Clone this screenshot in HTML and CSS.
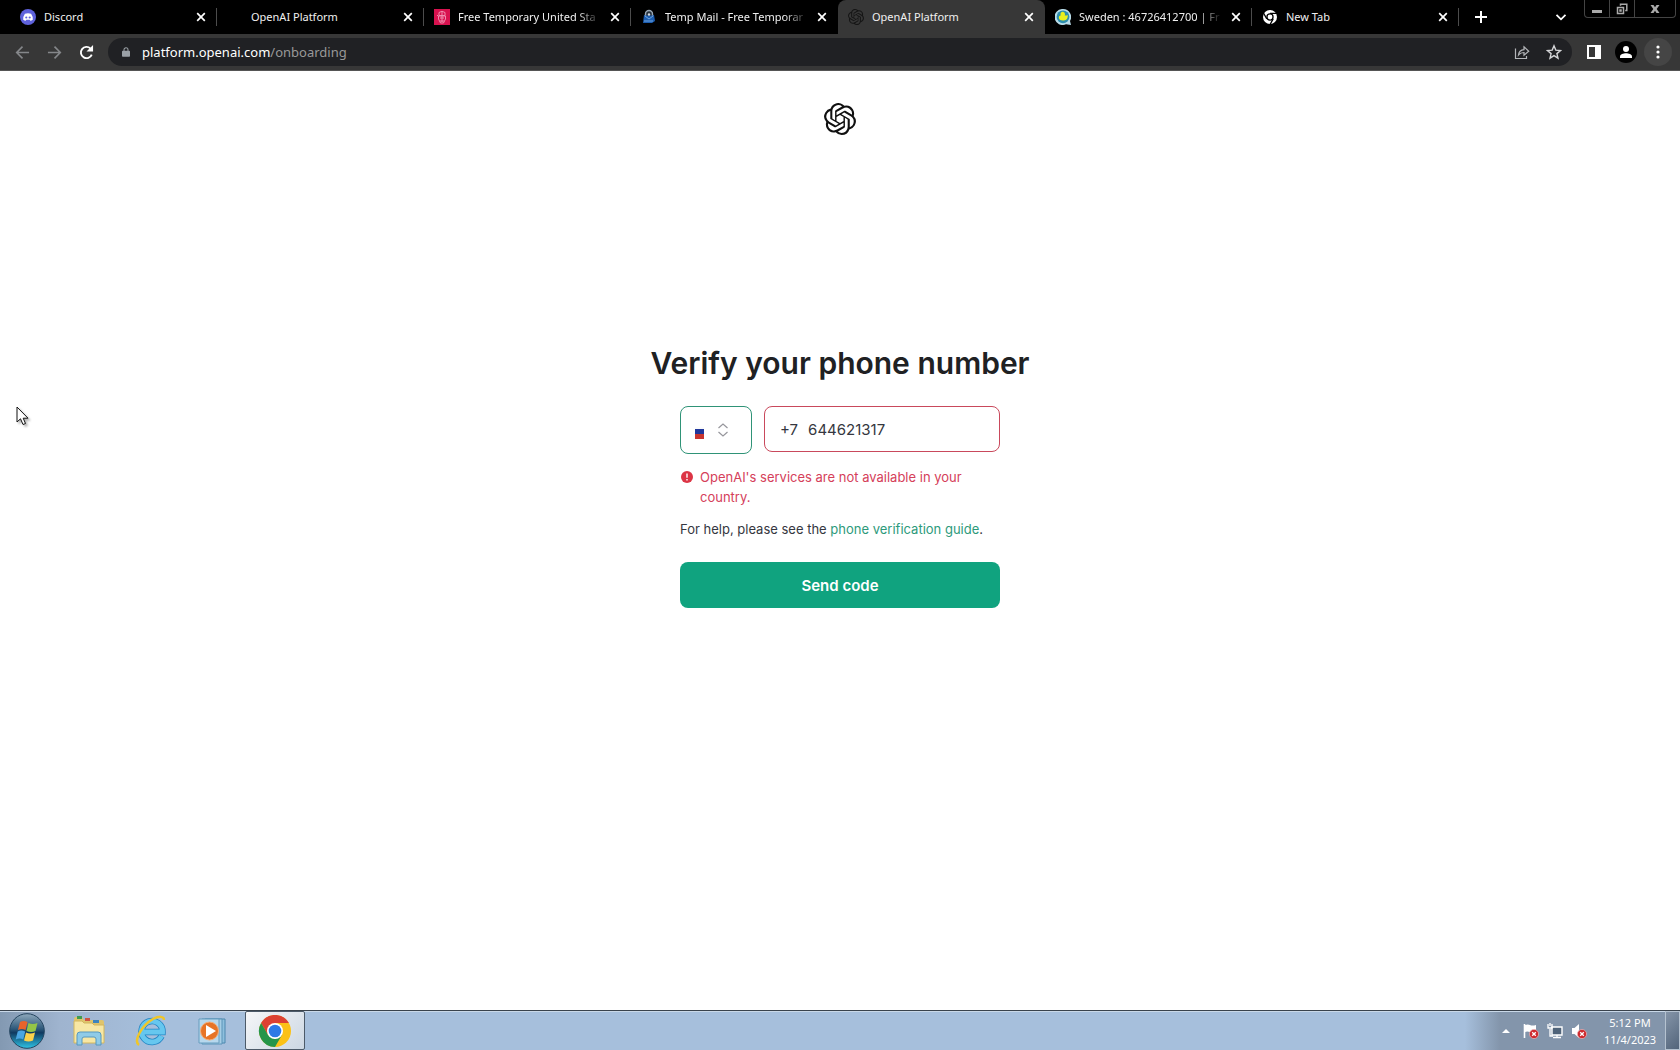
FILE: index.html
```
<!DOCTYPE html>
<html lang="en">
<head>
    <meta charset="UTF-8">
    <meta name="viewport" content="width=device-width, initial-scale=1.0">
    <title>OpenAI Platform</title>
    <link rel="stylesheet" href="styles.css">
</head>
<body>
    <svg class="defs" aria-hidden="true">
        <symbol id="openai" viewBox="0 0 24 24">
            <path d="M22.2819 9.8211a5.9847 5.9847 0 0 0-.5157-4.9108 6.0462 6.0462 0 0 0-6.5098-2.9A6.0651 6.0651 0 0 0 4.9807 4.1818a5.9847 5.9847 0 0 0-3.9977 2.9 6.0462 6.0462 0 0 0 .7427 7.0966 5.98 5.98 0 0 0 .511 4.9107 6.051 6.051 0 0 0 6.5146 2.9001A5.9847 5.9847 0 0 0 13.2599 24a6.0557 6.0557 0 0 0 5.7718-4.2058 5.9894 5.9894 0 0 0 3.9977-2.9001 6.0557 6.0557 0 0 0-.7475-7.0729zm-9.022 12.6081a4.4755 4.4755 0 0 1-2.8764-1.0408l.1419-.0804 4.7783-2.7582a.7948.7948 0 0 0 .3927-.6813v-6.7369l2.02 1.1686a.071.071 0 0 1 .038.052v5.5826a4.504 4.504 0 0 1-4.4945 4.4944zm-9.6607-4.1254a4.4708 4.4708 0 0 1-.5346-3.0137l.142.0852 4.783 2.7582a.7712.7712 0 0 0 .7806 0l5.8428-3.3685v2.3324a.0804.0804 0 0 1-.0332.0615L9.74 19.9502a4.4992 4.4992 0 0 1-6.1408-1.6464zM2.3408 7.8956a4.485 4.485 0 0 1 2.3655-1.9728V11.6a.7664.7664 0 0 0 .3879.6765l5.8144 3.3543-2.0201 1.1685a.0757.0757 0 0 1-.071 0l-4.8303-2.7865A4.504 4.504 0 0 1 2.3408 7.872zm16.5963 3.8558L13.1038 8.364 15.1192 7.2a.0757.0757 0 0 1 .071 0l4.8303 2.7913a4.4944 4.4944 0 0 1-.6765 8.1042v-5.6772a.79.79 0 0 0-.407-.667zm2.0107-3.0231l-.142-.0852-4.7735-2.7818a.7759.7759 0 0 0-.7854 0L9.409 9.2297V6.8974a.0662.0662 0 0 1 .0284-.0615l4.8303-2.7866a4.4992 4.4992 0 0 1 6.6802 4.66zM8.3065 12.863l-2.02-1.1638a.0804.0804 0 0 1-.038-.0567V6.0742a4.4992 4.4992 0 0 1 7.3757-3.4537l-.142.0805L8.704 5.459a.7948.7948 0 0 0-.3927.6813zm1.0976-2.3654l2.602-1.4998 2.6069 1.4998v2.9994l-2.5974 1.4997-2.6067-1.4997Z"/>
        </symbol>
        <symbol id="close" viewBox="0 0 10 10">
            <path d="M1.2 1.2l7.6 7.6M8.8 1.2L1.2 8.8" fill="none" stroke="currentColor" stroke-width="1.7"/>
        </symbol>
        <symbol id="alert" viewBox="0 0 10 10">
            <circle cx="5" cy="5" r="4.6" fill="#cf2a2e" stroke="#e9b5b8" stroke-width=".7"/>
            <path d="M3.2 3.2l3.6 3.6M6.8 3.2L3.2 6.8" stroke="#fff" stroke-width="1.3"/>
        </symbol>
    </svg>

    <header class="browser">
        <div class="tabstrip">
            <div class="tab">
                <svg class="favicon" viewBox="0 0 16 16"><circle cx="8" cy="8" r="8" fill="#5f62dc"/><path d="M4.9 4.8Q8 3.6 11.1 4.8Q13 7.500 12.800 10.700Q11.600 11.600 10.300 11.800L9.700 10.800H6.300L5.700 11.800Q4.400 11.600 3.200 10.700Q3 7.500 4.900 4.800Z" fill="#fff"/><circle cx="6.300" cy="8.500" r="1.100" fill="#5f62dc"/><circle cx="9.700" cy="8.500" r="1.100" fill="#5f62dc"/></svg>
                <span class="tab-title">Discord</span>
                <button class="tab-close" aria-label="Close tab"><svg><use href="#close"/></svg></button>
            </div>
            <div class="tab">
                <span class="favicon"></span>
                <span class="tab-title">OpenAI Platform</span>
                <button class="tab-close" aria-label="Close tab"><svg><use href="#close"/></svg></button>
            </div>
            <div class="tab">
                <svg class="favicon" viewBox="0 0 16 16"><path fill="#d8124f" d="M0 0h16v16H0z"/><g fill="none" stroke="#f08cae"><path d="M5 3.500q3-2.500 6 0v3H5zM4.500 7h7v3l-2 4h-3l-2-4zM6 9h4M8 3v10M6 12h4M3 6l2 2"/></g></svg>
                <span class="tab-title fade">Free Temporary United Sta</span>
                <button class="tab-close" aria-label="Close tab"><svg><use href="#close"/></svg></button>
            </div>
            <div class="tab no-line">
                <svg class="favicon" viewBox="0 0 16 16"><path d="M3 6h10l1 6-3 2H2z" fill="#1c5db0"/><path d="M4.500 6.500V5a3.500 3.500 0 0 1 7 0v1.500" fill="#26323e" stroke="#9aa8b6" stroke-width="1.400"/><path d="M4 7l4 3 4-3M3 12h9" fill="none" stroke="#6da4df"/><circle cx="8" cy="5.500" r="1.200" fill="#d4dae0"/></svg>
                <span class="tab-title fade">Temp Mail - Free Temporar</span>
                <button class="tab-close" aria-label="Close tab"><svg><use href="#close"/></svg></button>
            </div>
            <div class="tab active no-line">
                <svg class="favicon dark"><use href="#openai"/></svg>
                <span class="tab-title">OpenAI Platform</span>
                <button class="tab-close" aria-label="Close tab"><svg><use href="#close"/></svg></button>
            </div>
            <div class="tab">
                <svg class="favicon" viewBox="0 0 16 16"><path d="M8 0a8 8 0 0 1 7 12l1 4-5-.8A8 8 0 1 1 8 0z" fill="#b9dce9"/><circle cx="8" cy="7.800" r="6.400" fill="#2d8eae"/><path d="M5.500 4.500a2.300 2.300 0 0 1 4.500.5l-.2 1.500q2 .2 3-.5.300 5-4 5.500-5 .3-5-3 0-1.800 1.800-2z" fill="#e9ef1e"/></svg>
                <span class="tab-title fade">Sweden : 46726412700 | Fr</span>
                <button class="tab-close" aria-label="Close tab"><svg><use href="#close"/></svg></button>
            </div>
            <div class="tab">
                <svg class="favicon" viewBox="0 0 16 16"><circle cx="8" cy="8" r="7" fill="#fff"/><path d="M8 4.300h7M4.800 9.900L1.300 3.800M11.200 9.900L7.700 16" stroke="#000" stroke-width="1.300"/><circle cx="8" cy="8" r="3.700" fill="#000"/><circle cx="8" cy="8" r="2.400" fill="#fff"/></svg>
                <span class="tab-title">New Tab</span>
                <button class="tab-close" aria-label="Close tab"><svg><use href="#close"/></svg></button>
            </div>
            <button class="new-tab" aria-label="New tab"><svg viewBox="0 0 12 12"><path d="M6 0v12M0 6h12" stroke="#fff" stroke-width="2"/></svg></button>
            <button class="tab-search" aria-label="Search tabs"><svg viewBox="0 0 12 12"><path d="M1.500 3.800L6 8.300l4.500-4.500" fill="none" stroke="#fff" stroke-width="1.800"/></svg></button>
            <div class="window-buttons">
                <button aria-label="Minimize"><svg viewBox="0 0 12 12"><path d="M1 7h10v3H1z" fill="#aaa"/></svg></button>
                <button aria-label="Restore"><svg viewBox="0 0 12 12"><path d="M4.500 2.800V1.200h6.300v6.300H9.200M1.500 4.500h6v6h-6zM4 7h1v1H4z" fill="none" stroke="#aaa" stroke-width="1.500"/></svg></button>
                <button class="wide" aria-label="Close"><svg viewBox="0 0 12 12"><path d="M1.500 2h3L6 4.300 7.500 2h3L7.700 6l2.800 4h-3L6 7.700 4.500 10h-3l2.800-4z" fill="#aaa"/></svg></button>
            </div>
        </div>

        <div class="toolbar">
            <button class="nav" aria-label="Back"><svg viewBox="0 0 16 16"><path d="M15 8H2M8 1.800L1.800 8 8 14.200" fill="none" stroke="#85878a" stroke-width="1.700"/></svg></button>
            <button class="nav" aria-label="Forward"><svg viewBox="0 0 16 16"><path d="M1 8h13M8 1.800L14.200 8 8 14.200" fill="none" stroke="#85878a" stroke-width="1.700"/></svg></button>
            <button class="nav" aria-label="Reload"><svg viewBox="0 0 16 16"><path d="M13.600 10.200A6 6 0 1 1 12.300 3.800L13.500 5" fill="none" stroke="#fff" stroke-width="2"/><path d="M15 0v7H8z" fill="#fff"/></svg></button>
            <div class="omnibox">
                <svg class="lock" viewBox="0 0 10 12"><path d="M1 4.500h8q1 0 1 1V11q0 1-1 1H1q-1 0-1-1V5.500q0-1 1-1z" fill="#9aa0a6"/><path d="M2.500 5V3.200a2.500 2.500 0 0 1 5 0V5" fill="none" stroke="#9aa0a6" stroke-width="1.300"/></svg>
                <a class="url" href="#">platform.openai.com<span>/onboarding</span></a>
                <button class="omni-btn" aria-label="Share"><svg viewBox="0 0 16 16"><path d="M1.500 4.500v10h11V12M4.500 11Q5 6 10 5.600V2.800l4.700 4.400L10 11.300V8.500Q6.500 8.500 4.500 11z" fill="none" stroke="#b4b6b9" stroke-width="1.200"/></svg></button>
                <button class="omni-btn" aria-label="Bookmark"><svg viewBox="0 0 16 16"><path d="M8 1.800l1.800 4.300 4.700.4-3.600 3.100 1.100 4.600L8 11.700l-4 2.500 1.100-4.600-3.600-3.100 4.700-.4z" fill="none" stroke="#d4d5d7" stroke-width="1.400"/></svg></button>
            </div>
            <button class="tool" aria-label="Side panel"><svg viewBox="0 0 14 14"><path d="M0 0h14v14H0zM2 2v10h6V2z" fill="#fff" fill-rule="evenodd"/></svg></button>
            <button class="tool profile" aria-label="Profile"><svg viewBox="0 0 14 14"><circle cx="7" cy="4" r="3" fill="#fff"/><path d="M1 13v-1.500C1 9 4.500 8.200 7 8.200s6 .8 6 3.300V13z" fill="#fff"/></svg></button>
            <button class="tool menu" aria-label="Menu"><svg viewBox="0 0 14 14"><circle cx="7" cy="2" r="1.600" fill="#fff"/><circle cx="7" cy="7" r="1.600" fill="#fff"/><circle cx="7" cy="12" r="1.600" fill="#fff"/></svg></button>
        </div>
    </header>

    <main class="page">
        <svg class="logo" role="img" aria-label="OpenAI"><use href="#openai"/></svg>
        <h1>Verify your phone number</h1>
        <form class="verify">
            <div class="phone-row">
                <div class="country">
                    <select aria-label="Country">
                        <option>Russia</option>
                    </select>
                    <svg class="flag" viewBox="0 0 9 12"><path fill="#fbfbfb" d="M0 0h9v3H0z"/><path fill="#20389c" d="M0 2h9v5H0z"/><path fill="#c8352f" d="M0 7h9v5H0z"/></svg>
                    <svg class="updown" viewBox="0 0 12 14"><path d="M1.500 5L6 1l4.500 4M1.500 9L6 13l4.500-4" fill="none" stroke="#96969c" stroke-width="1.200"/></svg>
                </div>
                <label class="phone" for="phone">
                    <span>+7</span>
                    <input type="tel" id="phone" value="644621317">
                </label>
            </div>
            <div class="error">
                <svg viewBox="0 0 12 12"><circle cx="6" cy="6" r="6" fill="#dc3545"/><path d="M6 2.500v4.200M6 8v1.500" stroke="#fff" stroke-width="1.400"/></svg>
                <span>OpenAI's services are not available in your country.</span>
            </div>
            <p class="help">For help, please see the <a href="#">phone verification guide</a>.</p>
            <button class="send" type="button">Send code</button>
        </form>
    </main>

    <footer class="taskbar">
        <button class="start" aria-label="Start">
            <svg viewBox="0 0 36 36">
                <defs>
                    <linearGradient id="orb" x1="0" y1="0" x2="0" y2="1"><stop offset="0" stop-color="#8fa9bd"/><stop offset=".45" stop-color="#2b5678"/><stop offset=".55" stop-color="#103a60"/><stop offset="1" stop-color="#2ec4e6"/></linearGradient>
                </defs>
                <circle cx="18" cy="18" r="17.300" fill="url(#orb)" stroke="#24445f"/>
                <path d="M11 9q3.500-2 7.500 0l-2 8q-3.500-2-7.500 0z" fill="#e8642c"/>
                <path d="M19.500 10q4 2 9 0l-2 8q-4.500 2-9 0z" fill="#94c547"/>
                <path d="M8.700 18.500q3.500-2 7.500 0l-2 8q-3.500-2-7.500 0z" fill="#4aa6e2"/>
                <path d="M17 19.500q4 2 9 0l-2 8q-4.500 2-9 0z" fill="#fbd14b"/>
            </svg>
        </button>
        <button class="pin" aria-label="Windows Explorer">
            <svg viewBox="0 0 34 32">
                <path d="M2 4q0-2 2-2h6l2 3h18q2 0 2 2v21H2z" fill="#dfc46c"/>
                <path d="M5 1h5v3H5z" fill="#3f9c50"/><path d="M13 3h5v3h-5z" fill="#cf5442"/><path d="M21 5h6v3h-6z" fill="#3d84bd"/>
                <path d="M2 6h8l2 2h8l2 2h10v18H2z" fill="#f7e7a4" stroke="#d2b65c"/>
                <path d="M5 30V20q0-3 3-3h18q3 0 3 3v10h-5v-6q0-2-2-2H12q-2 0-2 2v6z" fill="#8fcbe8" stroke="#5698bf"/>
            </svg>
        </button>
        <button class="pin" aria-label="Internet Explorer">
            <svg viewBox="0 0 34 32">
                <path d="M27.500 21a10.500 10.500 0 1 1 1-4H10" fill="none" stroke="#2384c2" stroke-width="6.500"/>
                <path d="M27.500 21a10.500 10.500 0 1 1 1-4H10" fill="none" stroke="#66c7ef" stroke-width="5"/>
                <path d="M5 30C-1 26 8 10 19 4c6-3 11-3 11 1" fill="none" stroke="#efc62a" stroke-width="2.500"/>
            </svg>
        </button>
        <button class="pin" aria-label="Windows Media Player">
            <svg viewBox="0 0 34 32">
                <path d="M9 4h20v24H9z" fill="#8ebfdd" stroke="#4d88ae"/>
                <path d="M6 4h20v25H6z" fill="#a7cee5" stroke="#5a94b8"/>
                <path d="M3 4h20v24H3z" fill="#b7d8ed" stroke="#679dbf"/>
                <circle cx="13.500" cy="16" r="9" fill="#e77426" stroke="#f4ae78"/>
                <path d="M10 10v12l10-6z" fill="#fff"/>
            </svg>
        </button>
        <button class="pin running" aria-label="Google Chrome">
            <svg viewBox="0 0 32 32">
                <circle cx="16" cy="16" r="16" fill="#fbc116"/>
                <path d="M2.100 8A16 16 0 0 1 29.900 8H16L9.100 20z" fill="#dc4132"/>
                <path d="M2.100 8A16 16 0 0 0 16 32l6.900-12L16 24 9.100 20z" fill="#259549"/>
                <circle cx="16" cy="16" r="8" fill="#fff"/>
                <circle cx="16" cy="16" r="6.300" fill="#2c79e6"/>
            </svg>
        </button>
        <div class="tray">
            <svg class="tray-arrow" viewBox="0 0 8 4"><path d="M0 4l4-4 4 4z" fill="#fff"/></svg>
            <svg class="tray-icon" viewBox="0 0 16 16"><path d="M1.500 1v14" stroke="#fff" stroke-width="1.600"/><path d="M2 2q3-1 5 0t6 0v7q-3 1-6 0t-5 0z" fill="#fff"/><use href="#alert" x="6" y="6" width="10" height="10"/></svg>
            <svg class="tray-icon" viewBox="0 0 16 16"><path d="M5 4h10v8H5z" fill="#50647a" stroke="#fff" stroke-width="1.400"/><path d="M10 12v2M6 14.500h8M3 6v7h3M1 1v4h4V1M3 0v3" fill="none" stroke="#fff" stroke-width="1.300"/></svg>
            <svg class="tray-icon" viewBox="0 0 16 16"><path d="M1 5h2.500L8 1v14l-4.500-4H1z" fill="#fff"/><use href="#alert" x="6" y="6" width="10" height="10"/></svg>
            <div class="clock"><span>5:12 PM</span><span>11/4/2023</span></div>
            <button class="show-desktop" aria-label="Show desktop"></button>
        </div>
    </footer>

    <svg class="cursor" viewBox="0 0 13 20"><path d="M1 1v15l3.500-3.200L7 18.500l2.500-1-2.300-5.300H12z" fill="#fff" stroke="#111"/></svg>
</body>
</html>
```
FILE: styles.css
```
* {
    box-sizing: border-box;
}
body {
    margin: 0;
    min-height: 100vh;
    display: flex;
    flex-direction: column;
    background: #fff;
    font-family: Inter, "Liberation Sans", sans-serif;
    color: #202123;
}
button {
    padding: 0;
    border: none;
    background: none;
    display: flex;
    align-items: center;
    justify-content: center;
    flex: none;
    cursor: pointer;
}
svg {
    display: block;
    flex: none;
}
.defs {
    position: absolute;
    width: 0;
    height: 0;
}

/* browser chrome */
.browser {
    font-family: "Noto Sans", "Open Sans", sans-serif;
    background: #373737;
    border-bottom: 1px solid #555;
}
.tabstrip {
    display: flex;
    height: 34px;
    padding: 0 4px 0 10px;
    background: #000;
}
.tab {
    flex: 0 1 207px;
    min-width: 0;
    display: flex;
    align-items: center;
    gap: 8px;
    padding: 0 10px;
    position: relative;
    color: #f0f0f0;
}
.tab::after {
    content: "";
    position: absolute;
    right: 0;
    top: 8px;
    width: 1px;
    height: 18px;
    background: #4c4c4c;
}
.no-line::after {
    display: none;
}
.active {
    background: #373737;
    border-radius: 8px 8px 0 0;
}
.favicon {
    width: 16px;
    height: 16px;
    flex: none;
}
.dark {
    fill: #151515;
}
.tab-title {
    flex: 1;
    min-width: 0;
    white-space: nowrap;
    font-size: 11px;
    line-height: 16px;
}
.fade {
    mask-image: linear-gradient(to right, #000 calc(100% - 24px), transparent);
}
.tab-close {
    width: 12px;
    height: 16px;
    color: #fff;
}
.tab-close svg {
    width: 10px;
    height: 10px;
}
.new-tab {
    width: 28px;
    margin-left: 4px;
    margin-right: auto;
    padding-left: 8px;
}
.tab-search {
    width: 28px;
    margin-right: 9px;
}
.new-tab svg, .tab-search svg {
    width: 12px;
    height: 12px;
}
.window-buttons {
    display: flex;
    height: 18px;
    border: 1px solid #444;
    border-top: none;
    border-radius: 0 0 4px 4px;
}
.window-buttons button {
    width: 25px;
    border-right: 1px solid #444;
}
.window-buttons .wide {
    width: 40px;
    border-right: none;
}
.window-buttons svg {
    width: 12px;
    height: 12px;
}
.toolbar {
    display: flex;
    align-items: center;
    height: 36px;
    padding: 0 8px 0 6px;
}
.nav {
    width: 32px;
    height: 28px;
}
.nav svg {
    width: 15px;
    height: 15px;
}
.omnibox {
    flex: 1;
    display: flex;
    align-items: center;
    height: 28px;
    margin: 0 8px 0 6px;
    padding: 0 2px 0 14px;
    border-radius: 14px;
    background: #202124;
}
.lock {
    width: 8px;
    height: 12px;
    margin-right: 12px;
}
.url {
    flex: 1;
    font-size: 13px;
    line-height: 20px;
    color: #fff;
    text-decoration: none;
}
.url span {
    color: #999;
}
.omni-btn {
    width: 32px;
    height: 28px;
}
.omni-btn svg {
    width: 16px;
    height: 16px;
}
.tool {
    width: 28px;
    height: 28px;
}
.tool svg {
    width: 14px;
    height: 14px;
}
.profile {
    width: 22px;
    height: 22px;
    margin: 0 7px;
    border-radius: 50%;
    background: #000;
}
.menu {
    border-radius: 50%;
    background: #454545;
}

/* page */
.page {
    flex: 1;
    display: flex;
    flex-direction: column;
    align-items: center;
    padding-top: 32px;
}
.logo {
    width: 32px;
    height: 32px;
    fill: #111;
}
h1 {
    margin: 208px 0 23px;
    font-size: 30px;
    line-height: 40px;
    font-weight: 600;
}
.verify {
    width: 320px;
}
.phone-row {
    display: flex;
    align-items: flex-start;
    gap: 12px;
}
.country {
    position: relative;
    flex: none;
    width: 72px;
    height: 48px;
}
.country select {
    appearance: none;
    width: 100%;
    height: 100%;
    border: 1px solid #2f9377;
    border-radius: 8px;
    background: #fff;
    color: transparent;
}
.flag, .updown {
    position: absolute;
    pointer-events: none;
}
.flag {
    left: 15px;
    top: 21px;
    width: 9px;
    height: 12px;
}
.updown {
    left: 37px;
    top: 17px;
    width: 12px;
    height: 14px;
}
.phone {
    flex: 1;
    min-width: 0;
    display: flex;
    align-items: center;
    gap: 10px;
    height: 46px;
    padding: 0 15px;
    border: 1px solid #c9495c;
    border-radius: 8px;
    font-size: 15px;
    color: #353740;
}
.phone input {
    flex: 1;
    min-width: 0;
    padding: 0;
    border: none;
    outline: none;
    font: inherit;
    color: inherit;
}
.error {
    display: flex;
    gap: 7px;
    margin-top: 13px;
    padding-left: 1px;
    font-size: 13px;
    line-height: 20px;
    color: #d5405a;
}
.error svg {
    width: 12px;
    height: 12px;
    margin-top: 4px;
}
.help {
    margin: 12px 0 23px;
    font-size: 13px;
    line-height: 20px;
    color: #353740;
}
.help a {
    color: #2d9a7b;
    text-decoration: none;
}
.send {
    width: 100%;
    height: 46px;
    border-radius: 8px;
    background: #10a37f;
    color: #fff;
    font: 600 15px Inter, "Liberation Sans", sans-serif;
}

/* taskbar */
.taskbar {
    display: flex;
    align-items: stretch;
    height: 40px;
    border-top: 1px solid #39424c;
    box-shadow: inset 0 1px #c9d8e8;
    background: linear-gradient(to right, #8399b2, #9fb4cf 60px, #a6bfdc 160px, #a6bfdc calc(100% - 215px), #8395ab calc(100% - 180px), #8395ab);
    font-family: "Noto Sans", "Open Sans", sans-serif;
}
.start {
    width: 54px;
}
.start svg {
    width: 36px;
    height: 36px;
}
.pin {
    width: 60px;
    margin-right: 2px;
}
.pin svg {
    width: 34px;
    height: 32px;
}
.pin:nth-child(2) {
    margin-left: 5px;
}
.running {
    border: 1px solid #4c5a69;
    border-radius: 2px;
    background: linear-gradient(135deg, #f5f6f8, #ccd7e3);
}
.tray {
    display: flex;
    align-items: center;
    margin-left: auto;
    color: #fff;
}
.tray-arrow {
    width: 8px;
    height: 4px;
    margin-right: 13px;
}
.tray-icon {
    width: 16px;
    height: 16px;
    margin-right: 8px;
}
.clock {
    display: flex;
    flex-direction: column;
    align-items: center;
    width: 70px;
    font-size: 11px;
    line-height: 17px;
}
.show-desktop {
    align-self: stretch;
    width: 15px;
    border: 1px solid #b5c2d0;
    background: linear-gradient(135deg, #8494a8, #53657b);
}
.cursor {
    position: absolute;
    left: 16px;
    top: 406px;
    width: 13px;
    height: 20px;
    filter: drop-shadow(2px 2px 1px rgba(0, 0, 0, 0.3));
}
```
